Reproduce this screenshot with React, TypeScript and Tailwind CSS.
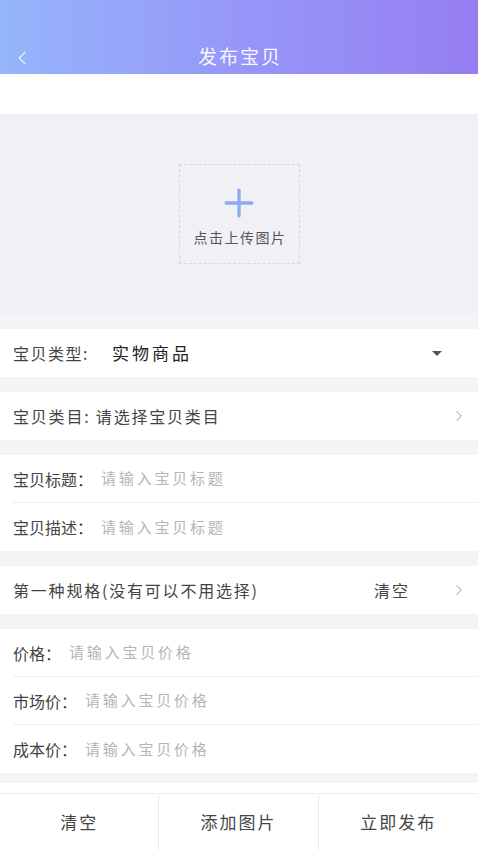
import { ChevronLeft, ChevronRight, Plus } from "lucide-react";

const font = { fontFamily: '"Noto Sans CJK SC", "Noto Sans", sans-serif' };

function Gap() {
  return <div className="h-[15px] bg-[#f4f4f6]" />;
}

function InputRow({ label, placeholder, divider }: { label: string; placeholder: string; divider?: boolean }) {
  return (
    <div className="flex h-12 items-center bg-white pl-[13px]">
      <div
        className={`flex h-full flex-1 items-center ${divider ? "border-b border-[#efefef]" : ""}`}
      >
        <span className="text-[16px] text-[#444]">{label}：</span>
        <span className="ml-[8px] text-[15px] tracking-[2.8px] text-[#b5b5b5]">{placeholder}</span>
      </div>
    </div>
  );
}

export default function App() {
  return (
    <main className="flex h-[850px] w-[478px] flex-col overflow-hidden bg-white" style={font}>
      <header className="relative flex h-[74px] items-end justify-center bg-gradient-to-r from-[#95b5fb] via-[#9697f8] to-[#967ef2] pb-[2px]">
        <ChevronLeft className="absolute left-[11px] top-[47px] h-[22px] w-[22px] text-white/80" strokeWidth={1.4} />
        <h1 className="pl-[2px] text-[19px] leading-[32px] tracking-[2px] text-white/95">发布宝贝</h1>
      </header>

      <div className="h-10 bg-white" />

      <section className="flex h-[200px] items-center justify-center bg-[#f1f1f5]">
        <div className="flex h-[100px] w-[121px] flex-col items-center justify-center border border-dashed border-[#d6d6dc]">
          <Plus className="h-[44px] w-[44px] text-[#8fa9f5]" strokeWidth={1.8} />
          <span className="mt-[2px] pl-[2px] text-[14px] tracking-[1.5px] text-[#555]">点击上传图片</span>
        </div>
      </section>

      <Gap />

      <div className="flex h-12 items-center bg-white pl-[13px] pr-[36px]">
        <span className="text-[16px] tracking-[1.5px] text-[#444]">宝贝类型:</span>
        <span className="ml-[23px] flex-1 text-[17px] tracking-[3px] text-[#222]">实物商品</span>
        <span className="h-0 w-0 border-x-[5px] border-t-[5px] border-x-transparent border-t-[#555]" />
      </div>

      <Gap />

      <div className="flex h-12 items-center bg-white pl-[13px] pr-[10px]">
        <span className="flex-1 text-[16px] tracking-[1.8px] text-[#444]">宝贝类目: 请选择宝贝类目</span>
        <ChevronRight className="h-[18px] w-[18px] text-[#999]" strokeWidth={1.3} />
      </div>

      <Gap />

      <InputRow label="宝贝标题" placeholder="请输入宝贝标题" divider />
      <InputRow label="宝贝描述" placeholder="请输入宝贝标题" />

      <Gap />

      <div className="flex h-12 items-center bg-white pl-[13px] pr-[10px] text-[#444]">
        <span className="flex-1 text-[16px] tracking-[1.8px]">第一种规格(没有可以不用选择)</span>
        <span className="mr-[40px] text-[16px] tracking-[2px]">清空</span>
        <ChevronRight className="h-[18px] w-[18px] text-[#999]" strokeWidth={1.3} />
      </div>

      <Gap />

      <InputRow label="价格" placeholder="请输入宝贝价格" divider />
      <InputRow label="市场价" placeholder="请输入宝贝价格" divider />
      <InputRow label="成本价" placeholder="请输入宝贝价格" />

      <div className="h-[10px] bg-[#f4f4f6]" />
      <div className="h-[10px] bg-white" />

      <footer className="grid flex-1 grid-cols-3 border-t border-[#ececec] bg-white text-[17px] tracking-[2px] text-[#444]">
        <button className="border-r border-[#ececec]">清空</button>
        <button className="border-r border-[#ececec]">添加图片</button>
        <button>立即发布</button>
      </footer>
    </main>
  );
}
